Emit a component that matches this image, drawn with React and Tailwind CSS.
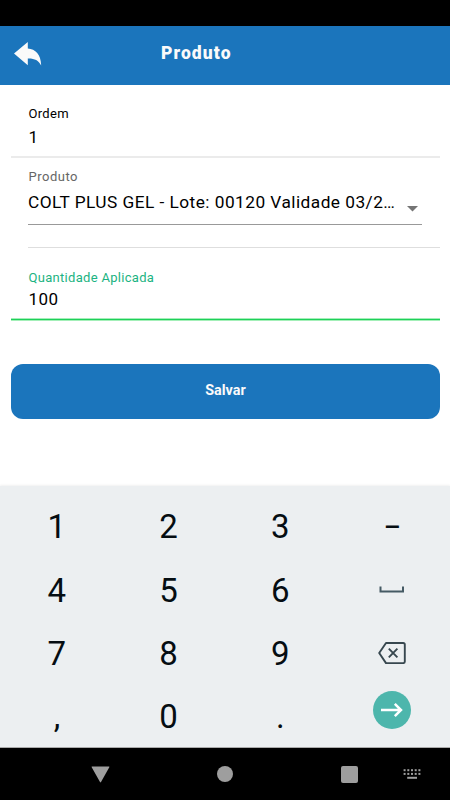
import React, { useState } from 'react';

const BackIcon = () => (
  <svg width="28" height="24" viewBox="0 0 28 24" fill="#fafafa">
    <path d="M13.8 0V6.5C21.5 7.2 26.8 12 27.2 23.4C24.2 18.4 20.6 16.4 13.8 16.6V23.2L0 11.5Z" />
  </svg>
);

const SpaceIcon = () => (
  <svg width="26" height="8" viewBox="0 0 26 8" fill="none" stroke="#455a64" strokeWidth="2">
    <path d="M1.5 0.5V5.5H24V0.5" />
  </svg>
);

const BackspaceIcon = () => (
  <svg width="28" height="22" viewBox="0 0 28 22" fill="none" stroke="#37474f" strokeWidth="1.9" strokeLinejoin="round">
    <path d="M8 1H25.2Q26.8 1 26.8 2.6V19.6Q26.8 21.1 25.2 21.1H8L1.2 11Z" />
    <path d="M9.8 6.7L18.4 15.3M18.4 6.7L9.8 15.3" transform="translate(1)" />
  </svg>
);

const NextIcon = () => (
  <svg width="38" height="38" viewBox="0 0 38 38">
    <circle cx="19" cy="19" r="19" fill="#4db6ac" />
    <path d="M8 19H28M21.8 12.8L28 19L21.8 25.2" fill="none" stroke="#fff" strokeWidth="2.5" />
  </svg>
);

const KeyboardIcon = () => (
  <svg width="18" height="12" viewBox="0 0 18 12" fill="#9e9e9e">
    {[0.6, 4.3, 8, 11.7, 15.4].map(x => (
      <React.Fragment key={x}>
        <rect x={x} y="1.2" width="2" height="2" />
        <rect x={x} y="4.9" width="2" height="2" />
      </React.Fragment>
    ))}
    <rect x="4.2" y="8.8" width="9.8" height="2" />
  </svg>
);

const keys = ['1', '2', '3', '−', '4', '5', '6', 'space', '7', '8', '9', 'delete', ',', '0', '.', 'next'];

const renderKey = (key) => {
  if (key === 'space') return <SpaceIcon />;
  if (key === 'delete') return <BackspaceIcon />;
  if (key === 'next') return <span className="block pb-3.5"><NextIcon /></span>;
  if (key === '−') return <span className="text-[32px]">{key}</span>;
  return key;
};

const App = () => {
  const [quantidade, setQuantidade] = useState('100');

  const handleKey = (key) => {
    if (key === 'delete') setQuantidade(prev => prev.slice(0, -1));
    else if (key === 'space') setQuantidade(prev => prev + ' ');
    else if (key === '−') setQuantidade(prev => prev + '-');
    else if (key !== 'next') setQuantidade(prev => prev + key);
  };

  return (
    <div className="w-[450px] h-[800px] flex flex-col overflow-hidden bg-white font-[Roboto,sans-serif] text-black">
      <div className="h-[26px] shrink-0 bg-black" />

      <header className="h-[59px] shrink-0 bg-[#1b75bc] flex items-start pl-3.5">
        <button className="w-[147px] pt-4"><BackIcon /></button>
        <h1 className="pt-[17px] text-[17.5px] leading-5 font-black tracking-[1.1px] text-[#fafafa]">Produto</h1>
      </header>

      <main className="h-[401px] shrink-0 pl-[11px] pr-[10px]">
        <div className="h-[73px] border-b-2 border-[#ebebeb] pl-[17.5px] pt-[21px]">
          <label className="block text-[13px] leading-4 tracking-[0.3px]">Ordem</label>
          <p className="pt-[5px] text-[17px] leading-5">1</p>
        </div>

        <div className="ml-[17px] h-[90px] border-b border-[#dedede] pt-[11px]">
          <label className="block pl-[0.5px] text-[13px] leading-4 tracking-[0.5px] text-[#666]">Produto</label>
          <div className="mr-[18px] flex h-[40px] border-b border-[#999]">
            <p className="pt-[7px] w-[379px] whitespace-nowrap text-[17.3px] leading-5 tracking-[0.46px]">COLT PLUS GEL - Lote: 00120 Validade 03/2…</p>
            <svg className="mt-[21px] shrink-0" width="11" height="6" viewBox="0 0 11 6" fill="#757575"><path d="M0 0H11L5.5 5.5Z" /></svg>
          </div>
        </div>

        <div className="h-[70px] pl-[17.5px] pt-[22px]">
          <label className="block text-[13px] leading-4 tracking-[0.3px] text-[#1cb382]">Quantidade Aplicada</label>
          <p className="pt-[3px] text-[17px] leading-5 tracking-[0.4px]">{quantidade}</p>
        </div>
        <div className="h-[3px] border-y border-[#a3efb8] bg-[#1dd05a]" />

        <button className="mt-[43px] block h-[55px] w-full rounded-[12px] bg-[#1b75bc] pb-[2px] text-[14.4px] leading-5 font-bold text-[#fafafa]">Salvar</button>
      </main>

      <div className="h-[262px] shrink-0 bg-[#eceff1] border-b border-[#aaa] pt-[9px] pl-px pr-[2px] grid grid-cols-4 auto-rows-[63.4px] shadow-[0_-1px_2px_rgba(0,0,0,0.06)]">
        {keys.map(key => (
          <button key={key} onClick={() => handleKey(key)} className="flex items-center justify-center text-[33px] leading-none text-[#050d12]">
            {renderKey(key)}
          </button>
        ))}
      </div>

      <nav className="h-[52px] shrink-0 bg-black flex items-center">
        <svg className="ml-[91px]" width="19" height="17" viewBox="0 0 19 17" fill="#9e9e9e"><path d="M1 0.6H18Q18.7 0.6 18.3 1.3L10 16Q9.5 16.8 9 16L0.7 1.3Q0.3 0.6 1 0.6Z" /></svg>
        <span className="ml-[107px] size-4 rounded-full bg-[#9e9e9e]" />
        <span className="ml-[108px] size-[17px] rounded-[2px] bg-[#9e9e9e]" />
        <span className="ml-[45px]"><KeyboardIcon /></span>
      </nav>
    </div>
  );
};

export default App;
